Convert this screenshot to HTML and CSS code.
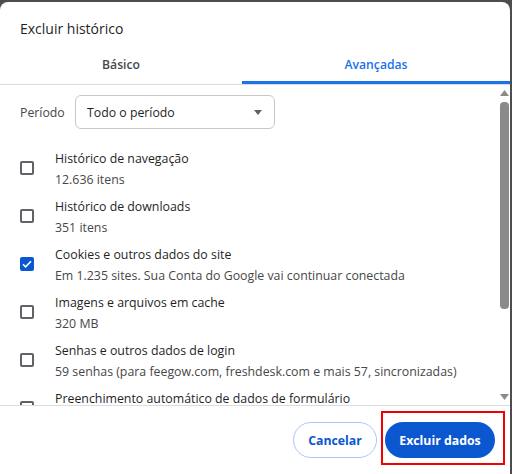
FILE: index.html
```html
<!DOCTYPE html>
<html lang="pt-BR">
<head>
<meta charset="utf-8">
<link rel="stylesheet" href="styles.css">
</head>
<body>
<div class="dialog">
  <div class="title">Excluir histórico</div>
  <div class="tabs">
    <div class="tab tab-basic">Básico</div>
    <div class="tab tab-adv active">Avançadas</div>
  </div>
  <div class="content">
    <div class="period">
      <span class="period-label">Período</span>
      <div class="select">
        <span>Todo o período</span>
        <svg class="caret" width="8" height="5" viewBox="0 0 8 5"><path d="M0 0h8L4 5z" fill="#5f6368"/></svg>
      </div>
    </div>
    <div class="row">
      <span class="cb"></span>
      <div class="texts"><div class="t1">Histórico de navegação</div><div class="t2">12.636 itens</div></div>
    </div>
    <div class="row">
      <span class="cb"></span>
      <div class="texts"><div class="t1">Histórico de downloads</div><div class="t2">351 itens</div></div>
    </div>
    <div class="row">
      <span class="cb checked"><svg width="10" height="8" viewBox="0 0 10 8"><path d="M1 4.2l2.6 2.6L9 1.3" fill="none" stroke="#fff" stroke-width="1.6"/></svg></span>
      <div class="texts"><div class="t1">Cookies e outros dados do site</div><div class="t2">Em 1.235 sites. Sua Conta do Google vai continuar conectada</div></div>
    </div>
    <div class="row">
      <span class="cb"></span>
      <div class="texts"><div class="t1">Imagens e arquivos em cache</div><div class="t2">320 MB</div></div>
    </div>
    <div class="row">
      <span class="cb"></span>
      <div class="texts"><div class="t1">Senhas e outros dados de login</div><div class="t2">59 senhas (para feegow.com, freshdesk.com e mais 57, sincronizadas)</div></div>
    </div>
    <div class="row">
      <span class="cb"></span>
      <div class="texts"><div class="t1">Preenchimento automático de dados de formulário</div><div class="t2">&nbsp;</div></div>
    </div>
    <div class="scrollbar">
      <svg class="arrow" width="9" height="6" viewBox="0 0 9 6"><path d="M0 6L4.5 0 9 6z" fill="#8a8a8a"/></svg>
      <div class="thumb"></div>
      <div class="track-rest"></div>
      <svg class="arrow" width="9" height="6" viewBox="0 0 9 6"><path d="M0 0h9L4.5 6z" fill="#8a8a8a"/></svg>
    </div>
  </div>
  <div class="footer">
    <button class="btn btn-cancel">Cancelar</button>
    <button class="btn btn-primary">Excluir dados</button>
    <div class="highlight"></div>
  </div>
</div>
</body>
</html>
```
FILE: styles.css
```css
* { box-sizing: border-box; }
html, body { margin: 0; padding: 0; }
body {
  background: #4d4d4d;
  width: 512px;
  height: 474px;
  overflow: hidden;
  font-family: "Open Sans", "Noto Sans", sans-serif;
  color: #1f1f1f;
}
.dialog {
  width: 510px;
  height: 472px;
  margin-top: 2px;
  background: #fff;
  border-radius: 8px 8px 0 0;
  display: flex;
  flex-direction: column;
  overflow: hidden;
}
.title {
  padding: 17px 20px 0;
  height: 44px;
  font-size: 14px;
  line-height: 20px;
  color: #1f1f1f;
}
.tabs {
  display: flex;
  height: 39px;
  border-bottom: 1px solid #dadce0;
}
.tab {
  display: flex;
  align-items: center;
  justify-content: center;
  font-size: 12.2px;
  font-weight: 600;
  color: #474747;
  padding-bottom: 2px;
}
.tab-basic { width: 242px; }
.tab-adv { flex: 1; }
.tab.active {
  color: #1a73e8;
  border-bottom: 3px solid #1a73e8;
  padding-bottom: 0;
  padding-top: 1px;
}
.content {
  flex: 1;
  position: relative;
  overflow: hidden;
  padding-top: 10px;
}
.period {
  display: flex;
  align-items: center;
  padding-left: 20px;
  height: 34px;
  margin-bottom: 15px;
}
.period-label {
  width: 55px;
  font-size: 12.3px;
  color: #474747;
}
.select {
  width: 200px;
  height: 34px;
  border: 1px solid #c7c7c7;
  border-radius: 6px;
  display: flex;
  align-items: center;
  justify-content: space-between;
  padding: 0 12px 0 11px;
  font-size: 12.3px;
  color: #1f1f1f;
}
.row {
  display: flex;
  align-items: center;
  height: 48px;
  padding-left: 20px;
}
.cb {
  width: 14px;
  height: 14px;
  border: 2px solid #5f6368;
  border-radius: 2px;
  margin-right: 21px;
  flex: none;
  display: flex;
  align-items: center;
  justify-content: center;
}
.cb.checked {
  background: #0b57d0;
  border-color: #0b57d0;
}
.texts { font-size: 12.35px; line-height: 21px; padding-top: 1px; }
.t1 { color: #1f1f1f; }
.t2 { color: #474747; }
.scrollbar {
  position: absolute;
  top: 0;
  right: 0;
  width: 13px;
  height: 100%;
  display: flex;
  flex-direction: column;
  align-items: center;
  padding: 5px 0 5px 1px;
}
.arrow { flex: none; }
.thumb {
  width: 9px;
  height: 207px;
  margin-top: 6px;
  background: #8a8a8a;
  border-radius: 4px;
}
.track-rest { flex: 1; }
.footer {
  position: relative;
  height: 69px;
  border-top: 1px solid #dadce0;
  display: flex;
  justify-content: flex-end;
  align-items: flex-start;
  gap: 8px;
  padding: 16px 15px 0 0;
}
.btn {
  height: 36px;
  border-radius: 18px;
  font-family: "Open Sans", "Noto Sans", sans-serif;
  font-size: 12.3px;
  font-weight: 700;
  padding: 0;
  cursor: pointer;
}
.btn-cancel {
  width: 84px;
  background: #fff;
  border: 1px solid #a8c7fa;
  color: #0b57d0;
}
.btn-primary {
  width: 110px;
  background: #0b57d0;
  border: none;
  color: #fff;
}
.highlight {
  position: absolute;
  left: 381px;
  top: 5px;
  width: 124px;
  height: 54px;
  border: 2px solid #f00000;
  pointer-events: none;
}
```
